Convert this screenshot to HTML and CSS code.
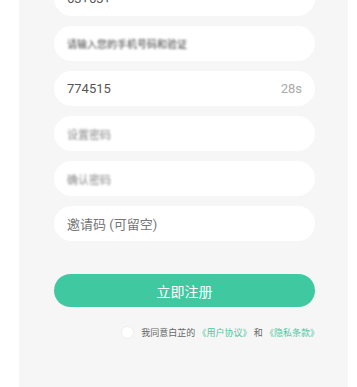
FILE: index.html
```html
<!DOCTYPE html>
<html>
  <head>
    <title>注册</title>
    <link rel="stylesheet" href="styles.css">
  </head>
  <body>
    <section class="panel">
      <form class="register">
        <div class="field"><span class="value">63+63+</span></div>
        <div class="field"><span class="value masked">请输入您的手机号码和验证</span></div>
        <div class="field">
          <span class="value">774515</span>
          <span class="timer">28s</span>
        </div>
        <div class="field"><span class="value masked light">设置密码</span></div>
        <div class="field"><span class="value masked light">确认密码</span></div>
        <div class="field"><span class="placeholder">邀请码 (可留空)</span></div>

        <button type="button" class="submit">立即注册</button>

        <div class="agree">
          <span class="check"></span>
          <span class="agree-text">我同意白芷的 <a href="#">《用户协议》</a> 和 <a href="#">《隐私条款》</a></span>
        </div>
      </form>
    </section>
  </body>
</html>
```

FILE: styles.css
```css
  body {
    margin: 0;
    background: #fff;
    font-family: Roboto, "Noto Sans CJK SC", sans-serif;
    overflow: hidden;
  }

  .panel {
    margin-left: 19px;
    width: 329px;
    height: 420px;
    background: #f6f6f6;
  }

  .register {
    display: flex;
    flex-direction: column;
    gap: 10px;
    width: 261px;
    padding-left: 35px;
    margin-top: -19px;
  }

  .field {
    display: flex;
    align-items: center;
    justify-content: space-between;
    height: 35px;
    padding: 0 13px;
    background: #fff;
    border-radius: 18px;
    font-size: 13px;
  }

  .value {
    color: #555;
  }

  .masked {
    display: inline-block;
    color: #444;
    font-size: 10px;
    filter: blur(0.8px);
  }

  .masked.light {
    color: #888;
    font-size: 11px;
  }

  .timer {
    color: #aaa;
  }

  .placeholder {
    color: #777;
  }

  .submit {
    margin-top: 23px;
    height: 33px;
    border: none;
    border-radius: 17px;
    background: #40c9a1;
    color: #fff;
    font-family: inherit;
    font-size: 14px;
  }

  .agree {
    display: flex;
    align-items: center;
    justify-content: flex-end;
    gap: 7px;
    margin-top: 9px;
    margin-right: -4px;
  }

  .check {
    width: 11px;
    height: 11px;
    border-radius: 50%;
    background: #fff;
    border: 1px solid #eee;
  }

  .agree-text {
    font-size: 9px;
    color: #666;
  }

  .agree-text a {
    color: #4cc9a0;
    text-decoration: none;
  }
```
